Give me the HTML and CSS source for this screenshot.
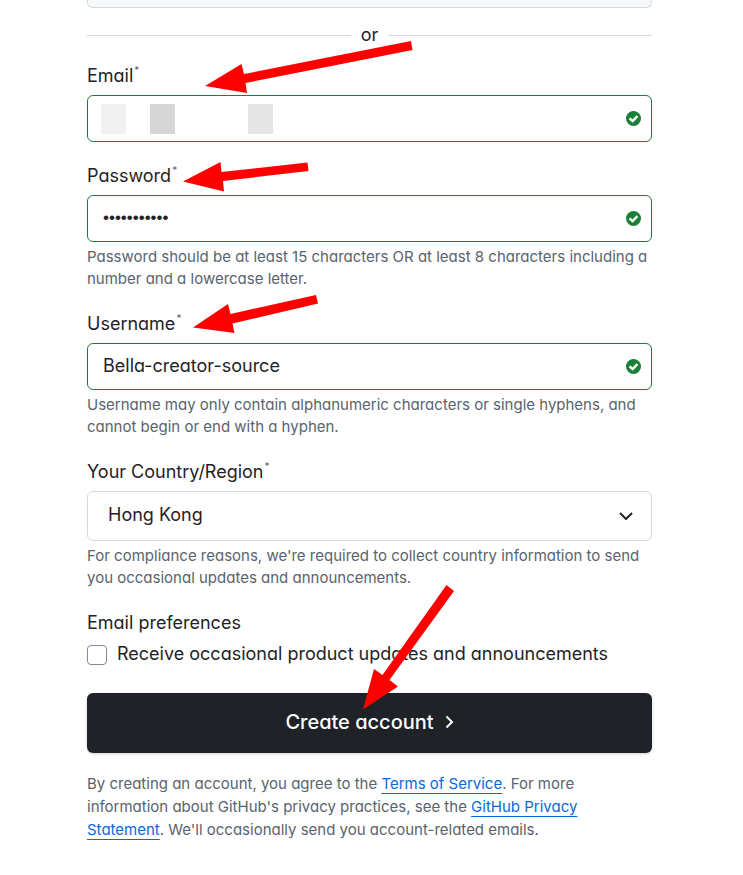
FILE: index.html
```html
<!DOCTYPE html>
<html lang="en">
<head>
<meta charset="utf-8">
<meta name="viewport" content="width=device-width, initial-scale=1">
<title>Create account</title>
<link rel="stylesheet" href="styles.css">
</head>
<body>
<svg class="symbols" aria-hidden="true">
  <symbol id="check" viewBox="0 0 16 16"><circle cx="8" cy="8" r="8" fill="#1a7f37"/><path d="M3.800 7.800 7 10.800 12.200 5.400" fill="none" stroke="#fff" stroke-width="2.600"/></symbol>
</svg>
<main class="signup">
  <div class="social"></div>
  <div class="divider"><span>or</span></div>
  <form class="form">
    <div class="field">
      <label class="label" for="email">Email<sup>*</sup></label>
      <div class="control">
        <input class="input" id="email" type="email">
        <span class="masks"><i class="mask light"></i><i class="mask dark"></i><i class="mask medium"></i></span>
        <svg class="check"><use href="#check"/></svg>
      </div>
    </div>
    <div class="field">
      <label class="label" for="password">Password<sup>*</sup></label>
      <div class="control">
        <input class="input password" id="password" type="password" value="abcdefgh123">
        <svg class="check"><use href="#check"/></svg>
      </div>
      <p class="help">Password should be at least 15 characters OR at least 8 characters including a number and a lowercase letter.</p>
    </div>
    <div class="field">
      <label class="label" for="username">Username<sup>*</sup></label>
      <div class="control">
        <input class="input" id="username" type="text" value="Bella-creator-source">
        <svg class="check"><use href="#check"/></svg>
      </div>
      <p class="help">Username may only contain alphanumeric characters or single hyphens, and cannot begin or end with a hyphen.</p>
    </div>
    <div class="field">
      <label class="label" for="country">Your Country/Region<sup>*</sup></label>
      <div class="control">
        <select class="select" id="country"><option>Hong Kong</option></select>
        <svg class="caret" viewBox="0 0 14 8"><path d="M1 1 7 7 13 1" fill="none" stroke="#1f2328" stroke-width="2"/></svg>
      </div>
      <p class="help">For compliance reasons, we're required to collect country information to send you occasional updates and announcements.</p>
    </div>
    <fieldset class="preferences">
      <legend class="label">Email preferences</legend>
      <label class="option"><input class="checkbox" type="checkbox"><span>Receive occasional product updates and announcements</span></label>
    </fieldset>
    <button class="submit" type="submit">Create account <svg class="arrow" viewBox="0 0 9 14"><path d="M1.500 1.500 7 7 1.500 12.500" fill="none" stroke="#fff" stroke-width="2"/></svg></button>
  </form>
  <p class="terms">By creating an account, you agree to the <a href="#terms">Terms of Service</a>. For more information about GitHub's privacy practices, see the <a href="#privacy">GitHub Privacy Statement</a>. We'll occasionally send you account-related emails.</p>
</main>
<svg class="pointers" width="743" height="875" viewBox="0 0 743 875" fill="#f00" aria-hidden="true">
  <path d="M205 86 241.500 64 244 74 411 41 412.500 50 245.500 83 247 93Z"/>
  <path d="M183 181.500 220.500 162 221.500 172 307.500 162.500 308.500 171 223 181 224 191.500Z"/>
  <path d="M193 327.500 228 304 230.500 314 316 295 318 303.500 232.500 323.500 234.500 333Z"/>
  <path d="M363 709.500 374 669 382.500 675 446.500 585 454 591 389.500 680 398 686.500Z"/>
</svg>
</body>
</html>
```
FILE: styles.css
```css
* { box-sizing: border-box; }
body {
  margin: 0;
  position: relative;
  background: #fff;
  color: #1f2328;
  font-family: Inter, "Liberation Sans", sans-serif;
  font-feature-settings: "cv11";
  font-size: 18px;
  line-height: 24px;
}
.symbols { display: none; }
.signup { padding: 0 91px 24px 87px; }
.social {
  height: 8px;
  border: 1px solid #d1d9e0;
  border-top: 0;
  border-radius: 0 0 6px 6px;
  background: #f6f8fa;
}
.divider {
  display: flex;
  align-items: center;
  gap: 10px;
  margin: 15px 0 17px;
}
.divider::before, .divider::after { content: ""; flex: 1; height: 1px; background: #d1d9e0; }
.form { display: flex; flex-direction: column; gap: 22px; }
.label { display: block; margin-bottom: 7px; padding: 0; }
sup { margin-left: 1px; color: #59636e; font-size: 10px; line-height: 0; vertical-align: 8px; }
.control { position: relative; display: flex; }
.input, .select {
  width: 100%;
  height: 47px;
  margin: 0;
  padding: 0 44px 2px 15px;
  border: 1px solid #1a7f37;
  border-radius: 6px;
  background: #fff;
  color: inherit;
  font: inherit;
  font-feature-settings: inherit;
}
.password { font-family: "Liberation Sans", sans-serif; font-size: 17px; }
.select { height: 50px; padding-left: 20px; border-color: #d1d9e0; appearance: none; }
.check { position: absolute; top: 16px; right: 11px; width: 15px; height: 15px; }
.caret { position: absolute; top: 21px; right: 19px; width: 14px; height: 8px; }
.masks { position: absolute; top: 9px; left: 14px; display: flex; }
.mask { width: 25px; height: 30px; }
.light { margin-right: 24px; background: #f1f1f1; }
.dark { margin-right: 73px; background: #d6d6d6; }
.medium { background: #e6e6e6; }
.help, .terms { margin: 4px 0 0; color: #59636e; font-size: 15px; line-height: 22px; }
.preferences { margin: 0; padding: 0; border: 0; }
.option { display: flex; gap: 10px; }
.checkbox {
  appearance: none;
  flex: none;
  width: 20px;
  height: 20px;
  margin: 3px 0 0;
  border: 1px solid #818b98;
  border-radius: 4px;
  background: #fff;
}
.submit {
  display: flex;
  align-items: center;
  justify-content: center;
  gap: 11px;
  height: 60px;
  margin-top: 5px;
  padding: 0 0 2px;
  border: 0;
  border-radius: 6px;
  background: #1f2328;
  box-shadow: 0 1px 3px #1f232833;
  color: #fff;
  font: inherit;
  font-feature-settings: inherit;
  font-size: 20px;
  font-weight: 500;
}
.arrow { width: 9px; height: 14px; }
.terms { margin-top: 19px; line-height: 23px; }
.terms a { color: #0969da; text-decoration: underline; text-decoration-thickness: 1px; text-underline-offset: 4px; }
.pointers { position: absolute; top: 0; left: 0; pointer-events: none; }
```
